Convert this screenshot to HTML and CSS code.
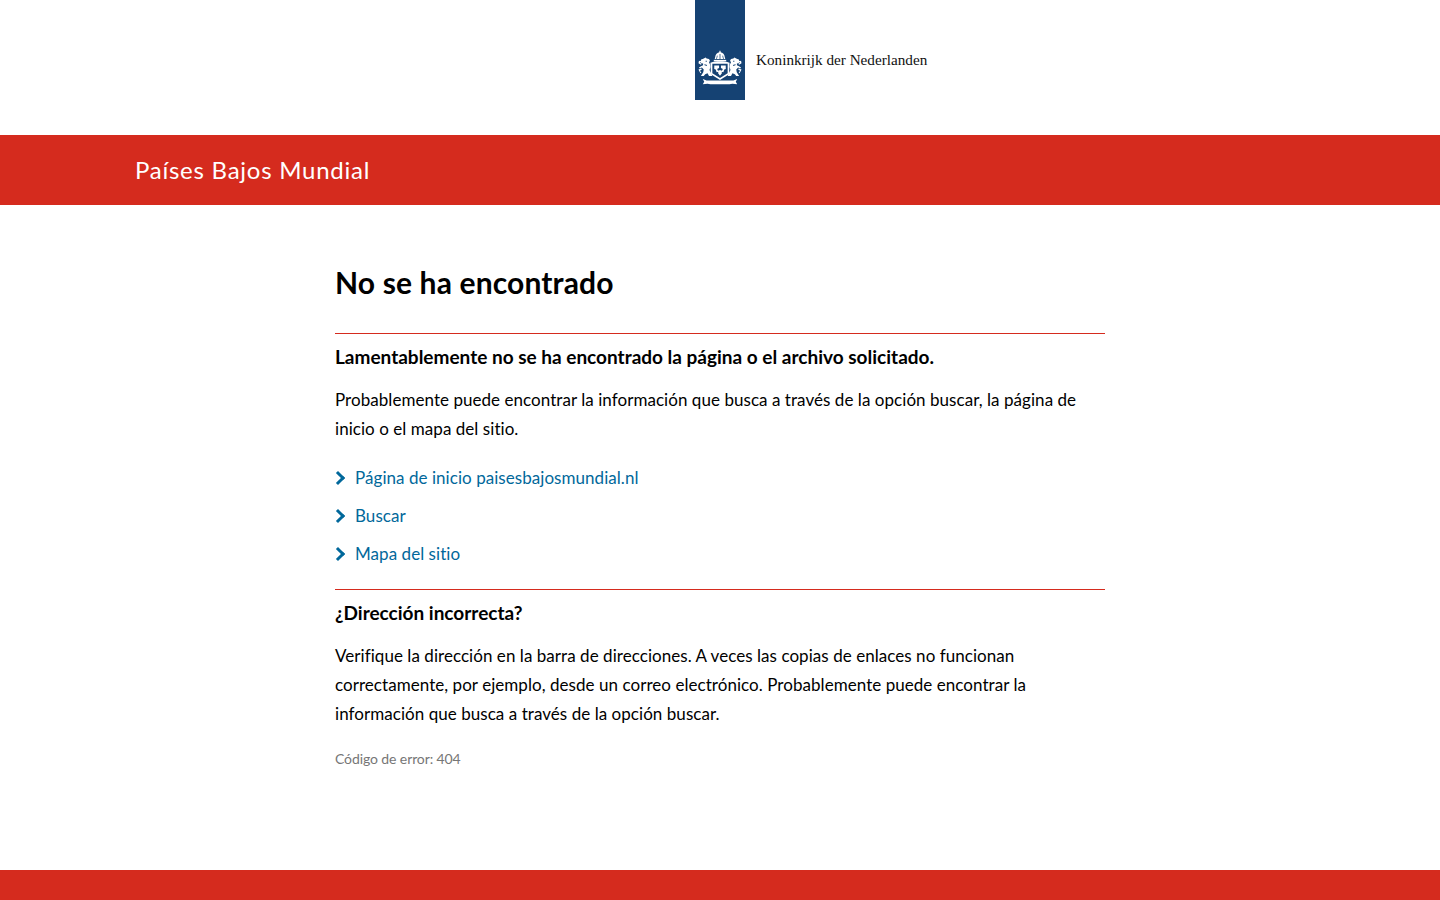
FILE: index.html
```html
<!DOCTYPE html>
<html lang="es">
<head>
	<meta charset="UTF-8">
	<title>No se ha encontrado</title>
	<link rel="stylesheet" href="styles.css">
</head>
<body>
	<div class="logo">
		<div class="logo-band">
			<svg class="crest" width="44" height="37" viewBox="0 0 46 38">
				<!-- kroon -->
				<path fill="#fff" d="M23 1l1 2h-.6c2.600 .4 4.400 2.400 4.600 5l.5 2h-11l.5-2c.2-2.600 2-4.600 4.600-5H22z"/>
				<path fill="#154273" d="M22.600 5h.8v5h-.8zM19.800 6.500l.7.200-.7 3.300h-.7zM26.200 6.500l-.7.200.7 3.300h.7z"/>
				<path fill="#fff" d="M16.500 11h13v1.500h-13z"/>
				<!-- mantel -->
				<path fill="#fff" d="M13 14c3-1 7-1.500 10-1.500s7 .5 10 1.500l-.5 12-9.500 6-9.500-6z"/>
				<!-- schild -->
				<path fill="#154273" d="M15 15h16v10l-8 5-8-5z"/>
				<path fill="#fff" d="M17 17h5v2.500l-2 1 1.500 3-2 .5-1-3-1.500-.5zM29 17h-5v2.500l2 1-1.500 3 2 .5 1-3 1.500-.5zM21.500 22h3l.5 3-2 2.500-2-2.500z"/>
				<!-- leeuw links -->
				<path fill="#fff" d="M5 10l3-1.500 1 1 2.500.5 1 2-1 1.500 1 2 .5 3-1 3 1.500 3 1.500 3.500h-3.500l-1.500-3-2.500 1-1.500 2h-3l2.500-4 .5-3-2-2-2 1-1-1 2.500-1.500 1.500-.5 .5-2-2.500-1-1.500-1.500 1.500-.5 .5-1.500z"/>
				<path fill="#fff" d="M1 12l2 .5-1 1.500 2 1-1 1-2.500-1.500zM.5 21l3-1 .5 1-2 1.500 1.500 2-1 .5z"/>
				<path fill="#154273" d="M8 12h1.200v1H8zM7 15.500l2.500 1-.5 1-2.500-1z"/>
				<!-- leeuw rechts -->
				<path fill="#fff" d="M41 10l-3-1.500-1 1-2.500.5-1 2 1 1.500-1 2-.5 3 1 3-1.500 3-1.500 3.500h3.500l1.500-3 2.500 1 1.500 2h3l-2.500-4-.5-3 2-2 2 1 1-1-2.500-1.500-1.500-.5-.5-2 2.500-1 1.500-1.500-1.500-.5-.5-1.500z"/>
				<path fill="#fff" d="M45 12l-2 .5 1 1.500-2 1 1 1 2.500-1.500zM45.500 21l-3-1-.5 1 2 1.500-1.500 2 1 .5z"/>
				<path fill="#154273" d="M38 12h-1.200v1H38zM39 15.500l-2.500 1 .5 1 2.500-1z"/>
				<!-- lint -->
				<path fill="#fff" d="M5 31l4 1.500h28l4-1.500-1.500 3 1.500 2.500-5-.5-3 .5H13l-3-.5-5 .5 1.500-2.500z"/>
			</svg>
		</div>
		<span class="logo-text">Koninkrijk der Nederlanden</span>
	</div>
	<div class="banner">
		<span class="banner-title">Países Bajos Mundial</span>
	</div>
	<div class="content">
		<h1>No se ha encontrado</h1>
		<div class="block">
			<h2>Lamentablemente no se ha encontrado la página o el archivo solicitado.</h2>
			<p>Probablemente puede encontrar la información que busca a través de la opción buscar, la página de inicio o el mapa del sitio.</p>
			<ul class="links">
				<li><a href="#">Página de inicio paisesbajosmundial.nl</a></li>
				<li><a href="#">Buscar</a></li>
				<li><a href="#">Mapa del sitio</a></li>
			</ul>
		</div>
		<div class="block">
			<h2>¿Dirección incorrecta?</h2>
			<p>Verifique la dirección en la barra de direcciones. A veces las copias de enlaces no funcionan correctamente, por ejemplo, desde un correo electrónico. Probablemente puede encontrar la información que busca a través de la opción buscar.</p>
			<p class="code">Código de error: 404</p>
		</div>
	</div>
	<div class="footer"></div>
</body>
</html>
```
FILE: styles.css
```css
*{
	margin: 0;
	padding: 0;
	box-sizing: border-box;
}
body{
	height: 900px;
	display: flex;
	flex-direction: column;
	overflow: hidden;
	font-family: Lato, "Liberation Sans", sans-serif;
	font-variant-ligatures: none;
	color: #000;
	background: #fff;
}
ul{
	list-style: none;
}
.logo{
	height: 135px;
	padding-left: 695px;
	display: flex;
	align-items: flex-start;
}
.logo-band{
	width: 50px;
	height: 100px;
	background: #154273;
	padding: 49px 0 0 3px;
}
.crest{
	display: block;
}
.logo-text{
	margin: 50px 0 0 11px;
	font-family: "Liberation Serif", serif;
	font-size: 15.2px;
	line-height: 20px;
	color: #111;
}
.banner{
	height: 70px;
	background: #d52b1e;
	padding: 0 0 2px 135px;
	display: flex;
	align-items: center;
}
.banner-title{
	font-size: 24px;
	color: #fff;
	letter-spacing: .75px;
}
.content{
	flex: 1;
	width: 770px;
	margin: 0 auto;
	padding-top: 60px;
}
h1{
	font-size: 30px;
	line-height: 34px;
	font-weight: 700;
	letter-spacing: .15px;
	margin-bottom: 34px;
}
.block{
	border-top: 1px solid #d52b1e;
	padding-top: 10px;
}
h2{
	font-size: 19px;
	line-height: 26px;
	font-weight: 700;
	margin-bottom: 15px;
}
.block p{
	font-size: 17px;
	line-height: 29px;
	letter-spacing: .05px;
}
.links{
	margin-top: 16px;
	margin-bottom: 16px;
}
.links li{
	height: 38px;
	line-height: 38px;
	font-size: 17px;
	letter-spacing: .05px;
	padding-left: 20px;
	position: relative;
}
.links li:before{
	content: "";
	position: absolute;
	left: -2px;
	top: 14px;
	width: 7px;
	height: 7px;
	border-top: 3px solid #01689b;
	border-right: 3px solid #01689b;
	transform: rotate(45deg);
}
.links a{
	color: #01689b;
	text-decoration: none;
}
.block p.code{
	font-size: 14px;
	line-height: 20px;
	letter-spacing: -.1px;
	color: #767676;
	margin-top: 21px;
}
.footer{
	height: 30px;
	background: #d52b1e;
}
```
